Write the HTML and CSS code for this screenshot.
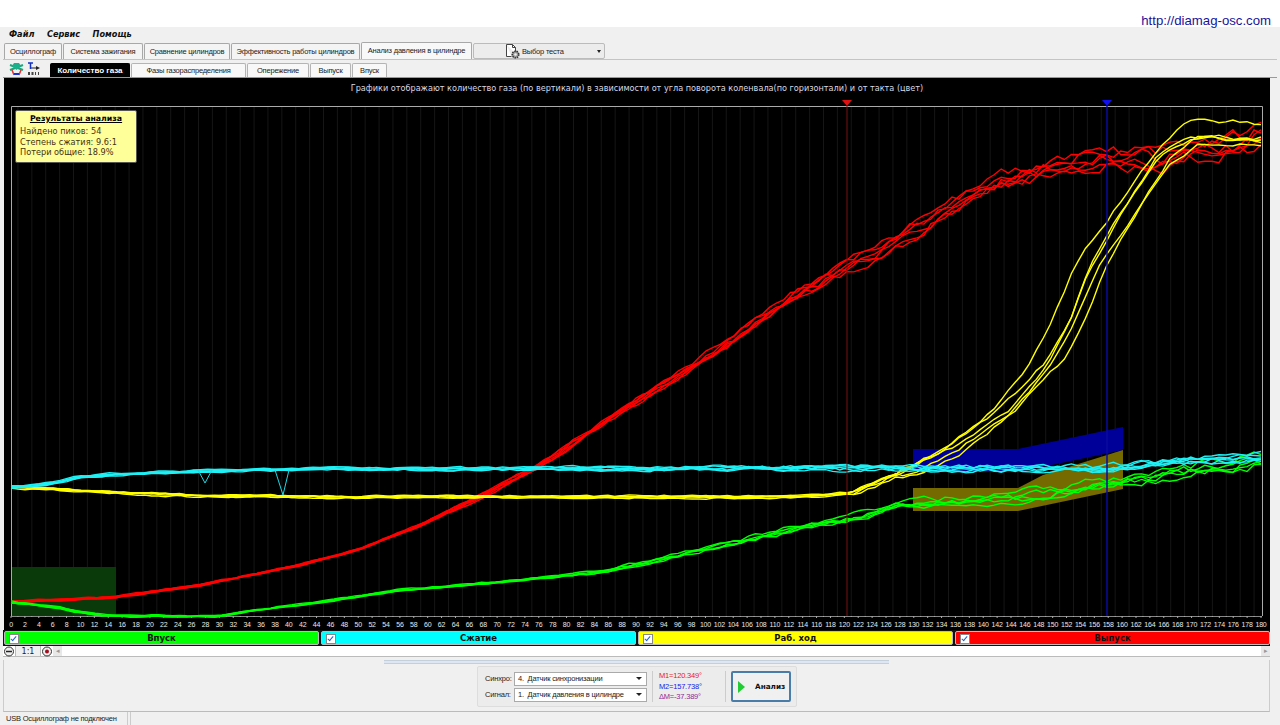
FILE: index.html
```html
<!DOCTYPE html>
<html lang="ru">
<head>
    <meta charset="UTF-8">
    <meta name="viewport" content="width=device-width, initial-scale=1.0">
    <title>Анализ давления в цилиндре</title>
    <link rel="stylesheet" href="styles.css">
</head>
<body>
    <div class="url-bar"><a class="site-link" href="#">http://diamag-osc.com</a></div>

    <div class="window">
        <div class="menu">
            <span>Файл</span>
            <span>Сервис</span>
            <span>Помощь</span>
        </div>

        <div class="main-tabs">
            <div class="tab t-osc">Осциллограф</div>
            <div class="tab t-ign">Система зажигания</div>
            <div class="tab t-cmp">Сравнение цилиндров</div>
            <div class="tab t-eff">Эффективность работы цилиндров</div>
            <div class="tab t-cyl active">Анализ давления в цилиндре</div>
            <div class="test-select">
                <svg class="test-icon" width="16" height="15" viewBox="0 0 16 15">
                    <path d="M1.500 .5h6l3 3v6M1.500 .5v12h5" fill="#fff" stroke="#444"/>
                    <path d="M7.500 .5v3h3" fill="none" stroke="#444"/>
                    <circle cx="10.500" cy="10.500" r="3.300" fill="#999" stroke="#333" stroke-width="1.500" stroke-dasharray="1.500 .8"/>
                    <circle cx="10.500" cy="10.500" r="1.300" fill="#eee"/>
                </svg>
                <span>Выбор теста</span>
                <i class="caret small"></i>
            </div>
        </div>

        <div class="sub-tabs">
            <div class="tool-icons">
                <svg width="15" height="14" viewBox="0 0 15 14">
                    <path d="M1 3l13 5M14 3L1 8" stroke="#1aa57a" stroke-width="2"/>
                    <path d="M5 1h5l2 3-4.500 4L3 4z" fill="#1bb08c"/>
                    <path d="M3 8l2 5M12 8l-2 5" stroke="#e03030" stroke-width="1.500"/>
                    <path d="M5 11h5v2H5z" fill="#2030d0"/>
                </svg>
                <svg width="12" height="14" viewBox="0 0 12 14">
                    <path d="M0 1h5M2.500 1v6" stroke="#1030c0" stroke-width="1.500" fill="none"/>
                    <path d="M3 6h6" stroke="#222"/>
                    <path d="M8 4l4 2-4 2z" fill="#222"/>
                    <path d="M0 10h2v3H0zM3.500 10h2v3h-2zM7 10h1v3H7zM10 10h1v3h-1z" fill="#444"/>
                </svg>
            </div>
            <div class="sub-tab s-gas selected">Количество газа</div>
            <div class="sub-tab s-phase">Фазы газораспределения</div>
            <div class="sub-tab s-adv">Опережение</div>
            <div class="sub-tab s-out">Выпуск</div>
            <div class="sub-tab s-in">Впуск</div>
        </div>

        <div class="chart-panel">
            <div class="chart-title">Графики отображают количество газа (по вертикали) в зависимости от угла поворота коленвала(по горизонтали) и от такта (цвет)</div>
            <svg id="chart" class="chart" width="1266" height="532" viewBox="4 98 1266 532"></svg>
            <div class="results">
                <div class="results-head">Результаты анализа</div>
                <div>Найдено пиков: 54</div>
                <div>Степень сжатия: 9.6:1</div>
                <div>Потери общие: 18.9%</div>
            </div>
        </div>

        <div class="phases">
            <div class="phase green"><i class="check"></i>Впуск</div>
            <div class="phase cyan"><i class="check"></i>Сжатие</div>
            <div class="phase yellow"><i class="check"></i>Раб. ход</div>
            <div class="phase red"><i class="check"></i>Выпуск</div>
        </div>

        <div class="zoom-row">
            <svg class="zoom-btn" width="12" height="11" viewBox="0 0 12 11">
                <circle cx="6" cy="5.500" r="4.500" fill="#eee" stroke="#333"/>
                <path d="M3 5.500h6" stroke="#222" stroke-width="1.500"/>
            </svg>
            <div class="zoom-value">1:1</div>
            <svg class="zoom-btn" width="12" height="11" viewBox="0 0 12 11">
                <circle cx="6" cy="5.500" r="4.500" fill="#eee" stroke="#333"/>
                <circle cx="6" cy="5.500" r="2" fill="#a01020"/>
            </svg>
            <div class="scroll-arrow">&#9666;</div>
            <div class="scroll-track"></div>
            <div class="scroll-arrow">&#9656;</div>
        </div>

        <div class="bottom">
            <div class="splitter"></div>
            <div class="controls">
                <div class="selects">
                    <div class="select-row">
                        <label>Синхро:</label>
                        <div class="combo"><span>4.&nbsp; Датчик синхронизации</span><i class="caret"></i></div>
                    </div>
                    <div class="select-row">
                        <label>Сигнал:</label>
                        <div class="combo"><span>1.&nbsp; Датчик давления в цилиндре</span><i class="caret"></i></div>
                    </div>
                </div>
                <div class="markers">
                    <div class="m1">M1=120.349°</div>
                    <div class="m2">M2=157.738°</div>
                    <div class="dm">ΔM=-37.389°</div>
                </div>
                <div class="analyze-wrap">
                    <button class="analyze"><i class="play"></i>Анализ</button>
                </div>
            </div>
        </div>

        <div class="status-bar">
            <div class="status-left">USB Осциллограф не подключен</div>
            <div class="status-right"></div>
        </div>
    </div>

    <script src="chart.js"></script>
</body>
</html>
```

FILE: styles.css
```css
html, body {
    margin: 0;
    padding: 0;
    background: white;
}
body {
    width: 1280px;
    height: 725px;
    overflow: hidden;
    font-family: "Liberation Sans", Arial, sans-serif;
    font-size: 7.5px;
    letter-spacing: -0.2px;
    white-space: nowrap;
    color: #222;
}
.url-bar {
    height: 27px;
    box-sizing: border-box;
    padding: 14px 9px 0 0;
    text-align: right;
    letter-spacing: 0;
}
.site-link {
    color: #14149a;
    font-size: 13.200px;
    line-height: 14px;
    text-decoration: none;
}
.window {
    background: #f0f0f0;
    padding: 0 3px;
    height: 695px;
}

/* menu */
.menu {
    display: flex;
    gap: 12.500px;
    height: 15px;
    padding-left: 6px;
    font-family: "DejaVu Sans", sans-serif;
    font-size: 8.200px;
    font-weight: bold;
    font-style: italic;
    line-height: 15px;
    letter-spacing: 0;
    color: #111;
}

/* tabs */
.main-tabs {
    display: flex;
    height: 18px;
    padding: 1px 0 0 1px;
    box-sizing: border-box;
    border-bottom: 1px solid #c4c4c4;
}
.tab {
    height: 16px;
    margin-right: 1px;
    box-sizing: border-box;
    border: 1px solid #a8a8a8;
    border-bottom: none;
    border-radius: 2px 2px 0 0;
    background: #f4f4f4;
    text-align: center;
    line-height: 15px;
}
.t-osc { width: 58px; }
.t-ign { width: 80px; }
.t-cmp { width: 86px; }
.t-eff { width: 129px; }
.t-cyl { width: 111px; }
.tab.active {
    height: 17px;
    margin-top: -1px;
    background: #f8f8f8;
    line-height: 15px;
}
.test-select {
    display: flex;
    align-items: center;
    width: 132px;
    height: 16px;
    box-sizing: border-box;
    padding: 0 3px 0 31px;
    border: 1px solid #bbb;
    border-radius: 2px;
    background: #ececec;
}
.test-icon {
    margin-right: 1px;
}
.test-select span {
    flex: 1;
}
.sub-tabs {
    display: flex;
    align-items: flex-end;
    height: 18px;
    padding-left: 1px;
    border-bottom: 1px solid #999;
    box-sizing: border-box;
}
.tool-icons {
    display: flex;
    gap: 4px;
    align-items: center;
    width: 46px;
    height: 16px;
    padding-left: 5px;
    box-sizing: border-box;
    align-self: center;
}
.sub-tab {
    height: 14px;
    margin-right: 1px;
    box-sizing: border-box;
    border: 1px solid #b4b4b4;
    border-bottom: none;
    border-radius: 2px 2px 0 0;
    background: #f8f8f8;
    text-align: center;
    line-height: 13px;
}
.sub-tab.selected {
    background: black;
    border-color: black;
    color: white;
    font-size: 8px;
    font-weight: bold;
    letter-spacing: 0;
}
.s-gas { width: 80px; }
.s-phase { width: 115px; }
.s-adv { width: 62px; }
.s-out { width: 41px; }
.s-in { width: 35px; }

/* chart */
.chart-panel {
    position: relative;
    margin-left: 1px;
    width: 1266px;
    height: 552px;
    background: black;
}
.chart-title {
    height: 20px;
    text-align: center;
    font-family: "DejaVu Sans", sans-serif;
    font-size: 8.150px;
    letter-spacing: 0;
    line-height: 20px;
    color: #d8d8e4;
}
.chart {
    display: block;
}
.results {
    position: absolute;
    left: 11px;
    top: 32px;
    width: 122px;
    height: 53px;
    box-sizing: border-box;
    padding: 2px 4px;
    background: #ffff99;
    border: 1px solid #555;
    border-radius: 2px;
    font-family: "DejaVu Sans", sans-serif;
    font-size: 8.200px;
    letter-spacing: 0;
    line-height: 10.500px;
    color: #443311;
}
.results-head {
    margin-bottom: 2px;
    font-size: 7.800px;
    line-height: 11px;
    text-align: center;
    font-weight: bold;
    text-decoration: underline;
    color: black;
}

/* phase strip */
.phases {
    display: flex;
    gap: 2px;
    height: 16px;
    padding: 1px 0 1px 1px;
    box-sizing: border-box;
    width: 1267px;
    background: #111;
}
.phase {
    position: relative;
    flex: 1;
    border: 1px solid #bbb;
    border-radius: 2px;
    box-sizing: border-box;
    text-align: center;
    font-family: "DejaVu Sans", sans-serif;
    font-size: 8.500px;
    font-weight: bold;
    letter-spacing: 0;
    line-height: 12px;
    color: #111;
}
.green { background: #00ff00; }
.cyan { background: #00ffff; }
.yellow { background: #ffff00; }
.red { background: #ff0000; }
.check {
    position: absolute;
    left: 4px;
    top: 2px;
    width: 8px;
    height: 8px;
    background: white;
    border: 1px solid #888;
}
.check::after {
    content: "";
    position: absolute;
    left: 2px;
    top: 0;
    width: 2px;
    height: 5px;
    border: solid #2060d0;
    border-width: 0 1.500px 1.500px 0;
    transform: rotate(40deg);
}

/* zoom row */
.zoom-row {
    display: flex;
    align-items: center;
    width: 1267px;
    height: 11px;
    box-sizing: border-box;
    border-bottom: 1px solid #bbb;
    background: white;
}
.zoom-btn {
    flex: none;
}
.zoom-value {
    width: 26px;
    height: 10px;
    background: #f0f0f0;
    border: solid #bbb;
    border-width: 0 1px;
    box-sizing: border-box;
    text-align: center;
    font-family: "DejaVu Sans", sans-serif;
    font-size: 8px;
    letter-spacing: 0;
    line-height: 12px;
}
.scroll-arrow {
    width: 9px;
    height: 10px;
    background: #e8e8e8;
    color: #999;
    font-size: 7px;
    line-height: 10px;
    text-align: center;
}
.scroll-track {
    flex: 1;
}

/* bottom controls */
.bottom {
    height: 52px;
    width: 1267px;
    box-sizing: border-box;
    border-bottom: 1px solid #bbb;
    border-left: 1px solid #ccc;
    border-right: 1px solid #ccc;
}
.splitter {
    width: 505px;
    height: 4px;
    margin: 3px auto 2px;
    box-sizing: border-box;
    border: 1px solid #c4cfdc;
    border-width: 1px 0;
    background: #dde6f2;
}
.controls {
    display: flex;
    align-items: center;
    width: 320px;
    height: 41px;
    box-sizing: border-box;
    margin-left: 473px;
    border: 1px solid #ddd;
    border-radius: 2px;
    background: #ececec;
}
.selects {
    width: 175px;
    padding-left: 7px;
    box-sizing: border-box;
    border-right: 1px solid #ccc;
    height: 31px;
}
.select-row {
    display: flex;
    align-items: center;
    height: 15px;
    margin-bottom: 1px;
}
.select-row label {
    width: 29px;
}
.combo {
    display: flex;
    align-items: center;
    justify-content: space-between;
    width: 133px;
    height: 14px;
    padding: 0 4px 0 3px;
    box-sizing: border-box;
    background: white;
    border: 1px solid #aaa;
}
.caret {
    width: 0;
    height: 0;
    border-left: 3px solid transparent;
    border-right: 3px solid transparent;
    border-top: 3px solid #222;
}
.caret.small {
    border-left-width: 2px;
    border-right-width: 2px;
}
.markers {
    width: 73px;
    height: 31px;
    padding-left: 6px;
    box-sizing: border-box;
    border-right: 1px solid #ccc;
    line-height: 10.500px;
}
.m1 { color: #e81818; }
.m2 { color: #2020e8; }
.dm { color: #8a2a9a; }
.analyze-wrap {
    padding-left: 5px;
}
.analyze {
    display: flex;
    align-items: center;
    width: 60px;
    height: 31px;
    padding: 0 0 0 5px;
    box-sizing: border-box;
    background: #f0f0f0;
    border: 2px solid #4a7ca8;
    border-radius: 2px;
    font-family: "DejaVu Sans", sans-serif;
    font-size: 7.300px;
    font-weight: bold;
    letter-spacing: 0;
    color: #111;
}
.play {
    width: 0;
    height: 0;
    margin-right: 10px;
    border-top: 6px solid transparent;
    border-bottom: 6px solid transparent;
    border-left: 7px solid #22cc33;
}

/* status bar */
.status-bar {
    display: flex;
    gap: 2px;
    width: 1280px;
    height: 13px;
    margin-left: -3px;
    background: #f0f0f0;
}
.status-left {
    width: 128px;
    padding-left: 6px;
    box-sizing: border-box;
    border-right: 1px solid #ccc;
    line-height: 14px;
}
.status-right {
    flex: 1;
    border-left: 1px solid #ccc;
}
```

FILE: chart.js
```js
// Draws the gas chart: grid, ticks, zones, traces and markers.
// All coordinates are page pixels, the svg viewBox lines up with the page.
const svg = document.getElementById('chart');
const X0 = 11, X1 = 1261, TOP = 106, BOTTOM = 616;
const deg = d => X0 + (X1 - X0) * d / 180;

let seed = 12345;
function rnd() {
    seed = (seed * 16807) % 2147483647;
    return seed / 2147483647 - 0.5;
}

function add(markup) {
    svg.insertAdjacentHTML('beforeend', markup);
}

function interp(points, x) {
    if (x <= points[0][0]) return points[0][1];
    for (let i = 1; i < points.length; i++) {
        if (x <= points[i][0]) {
            const a = points[i - 1], b = points[i];
            return a[1] + (b[1] - a[1]) * (x - a[0]) / (b[0] - a[0]);
        }
    }
    return points[points.length - 1][1];
}

// amp(x) is how far a trace wanders from the mean curve at x,
// shift(n, x) pushes strand n sideways where the curve is steep,
// lift(n, x) moves it up or down
function trace(points, color, count, amp, shift, lift) {
    for (let n = 0; n < count; n++) {
        const offset = rnd() * 2;
        let walk = 0;
        let d = '';
        for (let i = 0; i <= 178; i++) {
            const x = X0 + i * (X1 - X0) / 178;
            walk = walk * 0.55 + rnd() * 1.5;
            const sx = shift ? shift(n, x) : 0;
            const up = lift ? lift(n, x) : 0;
            const y = interp(points, x - sx) + (offset + walk) * amp(x) + up;
            d += (d ? ' ' : '') + x.toFixed(1) + ',' + y.toFixed(1);
        }
        add(`<polyline points="${d}" fill="none" stroke="${color}" stroke-width="1.4"/>`);
    }
}

// grid
for (let d = 1; d <= 179; d += 2) {
    add(`<path d="M${deg(d)} ${TOP}V${BOTTOM}" stroke="#161616" stroke-width="1"/>`);
}

// zones
add(`<rect x="11" y="567" width="105" height="49" fill="#0a3a0a"/>`);
add(`<polygon points="913,449 1018,449 1123,427 1123,450 1018,472 913,472" fill="#000099"/>`);
add(`<polygon points="913,488 1018,488 1043,475 1123,450 1123,489 1018,511 913,511" fill="#756a00"/>`);

// frame
add(`<path d="M11.500 ${BOTTOM}V106.500H1262.500V${BOTTOM}" fill="none" stroke="#aaa"/>`);
add(`<path d="M11 ${BOTTOM}.5H1262" stroke="#888"/>`);

// ticks and labels
for (let d = 0; d <= 180; d++) {
    add(`<path d="M${deg(d)} ${BOTTOM}v${d % 2 ? 1 : 2}" stroke="#aaa"/>`);
    if (d % 2 === 0) {
        add(`<text x="${deg(d)}" y="627" fill="#e8e8e8" font-family="Liberation Sans, Arial, sans-serif" font-size="7" text-anchor="middle">${d}</text>`);
    }
}

const RED = [[11,602],[116,597],[200,585],[300,565],[360,549],[420,525],[480,497],[540,465],[600,425],[700,362],[800,293],[850,266],[900,240],[950,207],[1000,180],[1050,168],[1107,158],[1160,160],[1200,150],[1262,138]];
const YELLOW = [[11,487],[50,489],[100,492],[200,496],[300,497],[800,497],[850,493],[900,475],[950,452],[1007,410],[1030,385],[1050,360],[1070,320],[1090,270],[1110,235],[1135,198],[1160,160],[1190,140],[1262,141]];
const CYAN = [[11,487],[35,486],[60,482],[80,477],[120,474],[200,471],[320,469],[900,468],[1100,469],[1150,465],[1200,460],[1262,457]];
const GREEN = [[11,602],[30,604],[60,608],[80,612],[100,615],[130,616],[220,616],[240,612],[320,602],[400,590],[500,582],[600,572],[700,550],[800,527],[850,518],[900,504],[1018,497],[1080,487],[1123,480],[1160,475],[1200,468],[1262,460]];

const grow = (a, b, start) => x => x < start ? a : a + (b - a) * (x - start) / (X1 - start);
const YELLOW_SHIFT = [-14, -4, 1, 7, 11];

trace(RED, '#ff0000', 6, grow(0.8, 9, 400));
trace(YELLOW, '#ffff00', 5, x => x < 850 ? 1.1 : x < 1180 ? 2.4 : 3, (n, x) => {
    if (x < 900 || x > 1220) return 0;
    return YELLOW_SHIFT[n] + Math.sin(x / 35 + n * 2) * 4;
}, (n, x) => {
    // the earliest strand climbs on to a higher plateau
    if (n === 0 && x > 1150) return -Math.min(18, (x - 1150) * 0.4);
    return 0;
});
trace(GREEN, '#00ff00', 5, grow(0.8, 6, 500));
trace(CYAN, '#1ff0f4', 6, grow(1.1, 3.5, 300));

// the two small drop-outs on the compression trace
add(`<polyline points="198,470 205,483 212,470" fill="none" stroke="#1fd8e4" stroke-width="1"/>`);
add(`<polyline points="275,470 283,495 289,470" fill="none" stroke="#1fd8e4" stroke-width="1"/>`);

// markers
add(`<path d="M847 106V616" stroke="#7a1010" stroke-width="1"/>`);
add(`<polygon points="842,100 852,100 847,106" fill="#e01010"/>`);
add(`<path d="M1107 106V616" stroke="#0a0aa0" stroke-width="1.500"/>`);
add(`<polygon points="1102,100 1112,100 1107,106" fill="#1010f0"/>`);
```
